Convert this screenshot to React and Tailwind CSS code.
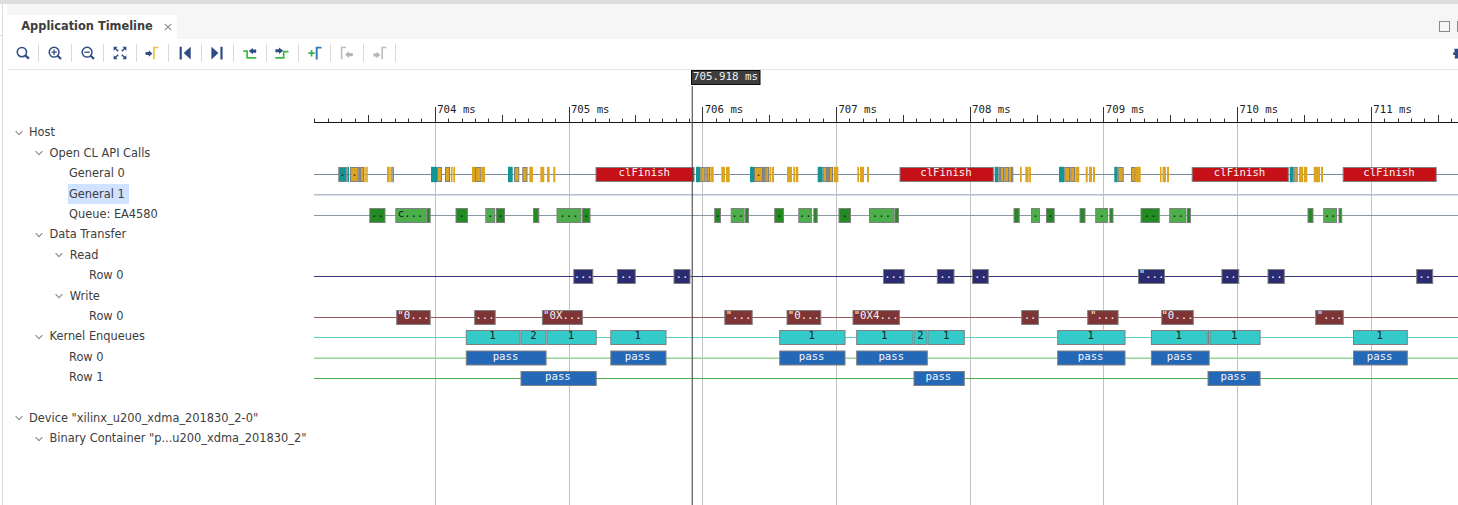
import React from "react";

const NAVY = "#2f4b85";
const MONO = "font-['DejaVu_Sans_Mono',monospace]";

const ICONS = [
  // search
  <g fill="none" stroke={NAVY}>
    <circle cx="5.9" cy="6.1" r="4.6" strokeWidth="1.6" />
    <path d="M9.2 9.4 13 12.7" strokeWidth="2.2" />
  </g>,
  // zoom in
  <g fill="none" stroke={NAVY}>
    <circle cx="6.1" cy="6.2" r="4.9" strokeWidth="1.5" />
    <path d="M9.6 9.7 13 13" strokeWidth="2.2" />
    <path d="M3.4 6.2h5.4M6.1 3.5v5.4" strokeWidth="1.3" />
  </g>,
  // zoom out
  <g fill="none" stroke={NAVY}>
    <circle cx="6.1" cy="6.2" r="4.9" strokeWidth="1.5" />
    <path d="M9.6 9.7 13 13" strokeWidth="2.2" />
    <path d="M3.4 6.2h5.4" strokeWidth="1.3" />
  </g>,
  // fit
  <g fill={NAVY} stroke={NAVY}>
    <path
      d="M.6.7h4L.6 4.7zM13.4.7h-4l4 4zM.6 13.3h4l-4-4zM13.4 13.3h-4l4-4z"
      stroke="none"
    />
    <path d="M1.5 1.6 5.2 5.2M12.5 1.6 8.8 5.2M1.5 12.4 5.2 8.8M12.5 12.4 8.8 8.8" strokeWidth="1.5" />
  </g>,
  // go to cursor
  <g>
    <path d="M.6 5.9h3.2V4.2L7.4 7.5 3.8 10.8V9.1H.6z" fill={NAVY} />
    <path d="M9 13.2V1.5h4.4" fill="none" stroke="#e5c84c" strokeWidth="1.7" />
  </g>,
  // first
  <path d="M1.6.8h2.2v12.6H1.6zM12.7.8v12.6L5.7 7.1z" fill={NAVY} />,
  // last
  <path d="M10.4.8h2.2v12.6h-2.2zM1.4.8v12.6l7-6.3z" fill={NAVY} />,
  // previous transition
  <g>
    <path d="M.2 5.2h3.9v6.6h9.2" fill="none" stroke="#3dbb3d" strokeWidth="1.7" />
    <path d="M13.2 3.6H9.8V1.9L5.8 5.1l4 3.2V6.8h3.4z" fill={NAVY} />
  </g>,
  // next transition
  <g>
    <path d="M.2 11.8h8.5V5.6h4.8" fill="none" stroke="#3dbb3d" strokeWidth="1.7" />
    <path d="M.4 3.2H4V1.5l4.2 3.2L4 7.9V6.3H.4z" fill={NAVY} />
  </g>,
  // add marker
  <g fill="none">
    <path d="M.4 7.2h6.4M3.6 4v6.4" stroke="#3dae4a" strokeWidth="1.7" />
    <path d="M8.7 13.4V1.6h4.8" stroke="#2f78b7" strokeWidth="1.9" />
  </g>,
  // previous marker
  <g>
    <path d="M1.6 13.2V1.5H6" fill="none" stroke="#bcbcbc" strokeWidth="1.6" />
    <path d="M12.8 7H9V5.2L5.1 8.6 9 12v-1.8h3.8z" fill="#b5b5b5" />
  </g>,
  // next marker
  <g>
    <path d="M9.2 13.2V1.5h4.2" fill="none" stroke="#bcbcbc" strokeWidth="1.6" />
    <path d="M.5 7.4h3V5.8L7.3 9l-3.8 3.2v-1.6h-3z" fill="#b5b5b5" />
  </g>,
];

const TREE = [
  { label: "Host", pad: "pl-[7.5px]", open: true },
  { label: "Open CL API Calls", pad: "pl-[28px]", open: true },
  { label: "General 0", pad: "pl-[61px]" },
  { label: "General 1", pad: "pl-[61px]", selected: true },
  { label: "Queue: EA4580", pad: "pl-[61px]" },
  { label: "Data Transfer", pad: "pl-[28px]", open: true },
  { label: "Read", pad: "pl-[48.3px]", open: true },
  { label: "Row 0", pad: "pl-[81px]" },
  { label: "Write", pad: "pl-[48.3px]", open: true },
  { label: "Row 0", pad: "pl-[81px]" },
  { label: "Kernel Enqueues", pad: "pl-[28px]", open: true },
  { label: "Row 0", pad: "pl-[61px]" },
  { label: "Row 1", pad: "pl-[61px]" },
  { label: "", pad: "pl-[8px]" },
  { label: 'Device "xilinx_u200_xdma_201830_2-0"', pad: "pl-[7.5px]", open: true },
  { label: 'Binary Container "p...u200_xdma_201830_2"', pad: "pl-[28px]", open: true },
];

// [kind, start, end, label]; kinds: t teal, y amber, b amber with outline, g gray
const API = [
  ["tb", 338.3, 346.8, "."], ["t", 347.3, 349], ["b", 350, 358.7, "."], ["g", 358.7, 360], ["b", 360, 364], ["y", 364.3, 365.8], ["y", 366.2, 367.8],
  ["y", 387, 389.7], ["y", 390.2, 392.2], ["g", 392.3, 394],
  ["t", 431, 437], ["b", 437, 442], ["b", 445, 450], ["y", 450.8, 452.5], ["y", 453.3, 455],
  ["y", 472, 475], ["b", 475, 481.3], ["y", 481.3, 485],
  ["t", 508, 512.7], ["b", 514, 519.3], ["b", 522.3, 527.5], ["y", 529.3, 533], ["y", 540.3, 544.3], ["y", 547, 549.7], ["y", 553.3, 555.3],
  ["t", 696, 700.3], ["b", 700.3, 705.3], ["g", 705.3, 706.7], ["b", 706.7, 710], ["y", 710.3, 713.7], ["y", 721.3, 725], ["y", 726, 729.7],
  ["t", 750, 754], ["b", 754, 763, "."], ["g", 763, 765.3], ["b", 765.3, 769], ["y", 769.4, 771], ["y", 771.7, 774],
  ["y", 787, 792], ["y", 793.3, 795.3], ["y", 796, 798.3],
  ["t", 817.7, 822.7], ["b", 822.7, 827], ["g", 827, 829], ["b", 829, 833], ["y", 833.7, 838.3], ["y", 857.3, 859], ["y", 860, 864], ["y", 867, 869],
  ["t", 994.7, 998.3], ["g", 998.3, 1000], ["b", 1000, 1004], ["b", 1004.3, 1009], ["y", 1009, 1011], ["g", 1011, 1013.3],
  ["y", 1020, 1021.7], ["y", 1025.3, 1028.7], ["y", 1029.2, 1031],
  ["t", 1059, 1064.3], ["b", 1064.3, 1070], ["b", 1070.3, 1075], ["y", 1075.3, 1079.3], ["y", 1085.7, 1087.7], ["y", 1089, 1092], ["y", 1093, 1095],
  ["t", 1114.3, 1117.7], ["b", 1117.7, 1123.7], ["b", 1131, 1135.7], ["y", 1136, 1140.7],
  ["y", 1160, 1161.5], ["y", 1162.5, 1166], ["y", 1167, 1169],
  ["t", 1289.7, 1293.7], ["b", 1293.7, 1297.7], ["y", 1299, 1303], ["y", 1303.7, 1307.3], ["y", 1313.7, 1320], ["y", 1321, 1323],
  ["r", 595.5, 694.5, "clFinish"], ["r", 899.5, 993.8, "clFinish"], ["r", 1191.7, 1288.8, "clFinish"], ["r", 1342.7, 1436.7, "clFinish"],
];

const QUEUE = [
  ["d", 369.3, 385.5, ".."], ["l", 395.3, 426, "c..."], ["d", 426.2, 430.7], ["d", 455.5, 468, "."], ["l", 485.3, 495, "."], ["d", 495.7, 505, "."],
  ["d", 533, 539.3], ["l", 556.5, 581.5, "..."], ["d", 582, 590.5, "."], ["d", 714.2, 721, "."], ["l", 730.7, 744.7, ".."], ["d", 745, 749],
  ["d", 774.2, 784, "."], ["l", 798.3, 812, ".."], ["d", 813.3, 817.7], ["d", 838.5, 851, "."], ["l", 869, 894, "..."], ["d", 894.3, 899],
  ["d", 1013.5, 1019.7], ["l", 1031, 1040, "."], ["d", 1046, 1054.7, "."], ["d", 1079.5, 1085.5], ["l", 1095.2, 1108, "."], ["d", 1109.3, 1113.5],
  ["d", 1140.5, 1159.8, ".."], ["l", 1169.2, 1186, ".."], ["d", 1186.5, 1191], ["d", 1307.5, 1313.5], ["l", 1323.2, 1337, ".."], ["d", 1338.5, 1342.2],
];

const READ = [
  ["n", 573.3, 593.3, "..."], ["n", 616.9, 635.8, ".."], ["n", 673.5, 690.5, ".."], ["n", 883, 904.7, "..."], ["n", 936.8, 954.5, ".."],
  ["n", 972, 988.8, ".."], ["n", 1138, 1165, '"...'], ["n", 1221.4, 1239.3, ".."], ["n", 1267.5, 1284.8, ".."], ["n", 1416.2, 1433.2, ".."],
];

const WRITE = [
  ["m", 396.2, 430.7, '"0...'], ["m", 474.2, 495.7, "..."], ["m", 541.9, 582.9, '"0X...'], ["m", 724.3, 752.7, '"...'], ["m", 786.5, 821.3, '"0...'],
  ["m", 852.5, 899.9, '"0X4...'], ["m", 1021.2, 1039, ".."], ["m", 1087.2, 1118.6, '"...'], ["m", 1161.2, 1193.8, '"0...'], ["m", 1315.2, 1343.8, '"...'],
];

const KERNEL = [
  ["c", 465.8, 520.5, "1"], ["c", 520.5, 546.5, "2"], ["c", 546.5, 596.7, "1"], ["c", 610.3, 666.5, "1"], ["c", 779.2, 845.5, "1"],
  ["c", 856.2, 913.5, "1"], ["c", 913.5, 927.5, "2"], ["c", 927.5, 964.8, "1"], ["c", 1057.2, 1125.5, "1"], ["c", 1150.9, 1207.7, "1"],
  ["c", 1207.7, 1209.4], ["c", 1209.4, 1260.6, "1"], ["c", 1353, 1407.8, "1"],
];

const ROW0 = [
  ["p", 465.8, 546.6, "pass"], ["p", 610.3, 666.5, "pass"], ["p", 779.2, 845.5, "pass"], ["p", 856.2, 927.8, "pass"],
  ["p", 1057.2, 1125.5, "pass"], ["p", 1150.9, 1209.7, "pass"], ["p", 1353, 1407.8, "pass"],
];

const ROW1 = [["p", 520.5, 596.7, "pass"], ["p", 913.5, 964.8, "pass"], ["p", 1207.5, 1260.6, "pass"]];

const FILL = {
  t: "#149494", tb: "#149494", y: "#dca521", b: "#dca521", g: "#858585", r: "#c51017",
  d: "#228b22", l: "#4caf4c", n: "#2b2b72", m: "#7f3535", c: "#35caca", p: "#2468b8",
};
const INK = { tb: "#10201c", b: "#4a3200", d: "#06220a", l: "#06220a", c: "#0c2626" };

const LANES = [
  { y: 167, line: "#7489a0", items: API },
  { y: 187, line: "#b4c0ce", thick: true, items: [] },
  { y: 208, line: "#8c99a3", items: QUEUE },
  { y: 269, line: "#3b357f", items: READ },
  { y: 310, line: "#975a5e", items: WRITE },
  { y: 330, line: "#5fcfca", items: KERNEL },
  { y: 350.5, line: "#98d698", thick: true, items: ROW0 },
  { y: 371, line: "#4db154", items: ROW1 },
];

function Bar({ item, y }) {
  const [kind, a, b, label] = item;
  const plain = kind === "t" || kind === "y" || kind === "g";
  return (
    <g>
      {plain ? (
        <rect x={a} y={y - 0.2} width={b - a} height="15.4" fill={FILL[kind]} />
      ) : (
        <rect x={a + 0.5} y={y + 0.5} width={b - a - 1} height="14" fill={FILL[kind]} stroke="#808080" />
      )}
      {label && (
        <text
          x={(a + b) / 2 + (b - a > 50 ? -0.7 : 0)}
          y={y + 9.2}
          textAnchor="middle"
          fontSize="10.7"
          fill={INK[kind] || "#f4f4f8"}
        >
          {label}
        </text>
      )}
    </g>
  );
}

function Timeline() {
  const step = 13.373;
  const ticks = Array.from({ length: 86 }, (_, i) => ({ i: i - 9, x: 435.3 + (i - 9) * step }));
  return (
    <svg width="1144" height="435" viewBox="314 70 1144 435" className={`block shrink-0 ${MONO}`}>
      {ticks.filter((t) => t.i % 10 === 0).map((t) => (
        <rect key={t.i} x={Math.floor(t.x)} y="123" width="1" height="382" fill="#c2c2c2" />
      ))}
      <rect x="314" y="122" width="1144" height="1" fill="#151515" />
      {ticks.map((t) => {
        const top = t.i % 10 === 0 ? 107 : t.i % 5 === 0 ? 115 : 118.5;
        return <rect key={t.i} x={Math.floor(t.x)} y={top} width="1" height={122 - top} fill="#333" />;
      })}
      {ticks.filter((t) => t.i % 10 === 0).map((t) => (
        <text key={t.i} x={t.x + 1.9} y="113" fontSize="10.7" fill="#222">
          {`${704 + t.i / 10} ms`}
        </text>
      ))}
      {LANES.map((lane) => (
        <g key={lane.y}>
          <rect x="314" y={lane.thick ? lane.y + 7 : lane.y + 7} width="1144" height={lane.thick ? 1.5 : 1} fill={lane.line} />
          {lane.items.map((item, i) => (
            <Bar key={i} item={item} y={lane.y} />
          ))}
        </g>
      ))}
      <rect x="691.7" y="86" width="1.1" height="419" fill="#4a4a4a" />
      <rect x="691.5" y="70.5" width="68.5" height="14" fill="#3e3e3e" stroke="#0c0c0c" />
      <text x="693" y="80.4" fontSize="10.8" fill="#f0f0f0">705.918 ms</text>
    </svg>
  );
}

export default function App() {
  return (
    <div className="flex h-[505px] w-[1458px] flex-col overflow-hidden bg-white font-['DejaVu_Sans',sans-serif] text-[11.4px] text-[#3d3d3d]">
      <div className="h-1 shrink-0 bg-[#dedede]" />
      <div className="flex min-h-0 flex-1">
        <div className="flex w-[7px] shrink-0 flex-col">
          <div className="h-8 w-[3px] border-r border-b border-[#dcdcdc]" />
          <div className="w-[3px] flex-1 border-r border-[#dcdcdc]" />
        </div>
        <div className="flex min-w-0 flex-1 flex-col">
          <div className="flex h-[35px] shrink-0 items-end justify-between bg-[#f6f6f6]">
            <div className="flex h-6 w-[170px] items-center bg-white pl-[14.3px]">
              <span className="whitespace-nowrap font-bold">Application Timeline</span>
              <svg className="ml-[11px]" width="8" height="8" viewBox="0 0 8 8" stroke="#8c8c8c" strokeWidth="1.2">
                <path d="M.8.8 7.2 7.2M7.2.8.8 7.2" />
              </svg>
            </div>
            <div className="flex items-center gap-[7px] overflow-hidden pb-[7px]">
              <div className="size-[11px] border border-[#8a8a8a]" />
              <div className="h-[11px] w-px bg-[#8a8a8a]" />
            </div>
          </div>
          <div className="flex h-[31px] shrink-0 items-start justify-between border-b-[1.5px] border-[#e6e6e6]">
            <div className="flex pt-[5px]">
              {ICONS.map((icon, i) => (
                <div key={i} className="flex h-[18px] w-[32.45px] items-center justify-center border-r border-[#dadada]">
                  <svg width="14" height="14" viewBox="0 0 14 14">{icon}</svg>
                </div>
              ))}
            </div>
            <svg className="mt-[9px]" width="5" height="11" viewBox="0 0 5 11" fill={NAVY}>
              <path d="M1.4.8H5v9.6H1.8V8.2L2.2 7H.2V4.3h1.9L1.4 3.2z" />
            </svg>
          </div>
          <div className="flex min-h-0 flex-1">
            <div className="flex w-[307px] shrink-0 flex-col pt-[52.8px]">
              {TREE.map((row, i) => (
                <div key={i} className={`flex h-[20.4px] shrink-0 items-center ${row.pad}`}>
                  {row.open && (
                    <svg className="mr-[5.5px] shrink-0" width="8" height="6" viewBox="0 0 8 6" fill="none" stroke="#8f8f8f" strokeWidth="1.2">
                      <path d="M.6 1.2 4 4.6 7.4 1.2" />
                    </svg>
                  )}
                  <span
                    className={
                      row.selected
                        ? "flex h-full w-[61px] items-center whitespace-nowrap bg-[#cfe2ff] pl-px"
                        : "whitespace-nowrap pl-px"
                    }
                  >
                    {row.label}
                  </span>
                </div>
              ))}
            </div>
            <Timeline />
          </div>
        </div>
      </div>
    </div>
  );
}
